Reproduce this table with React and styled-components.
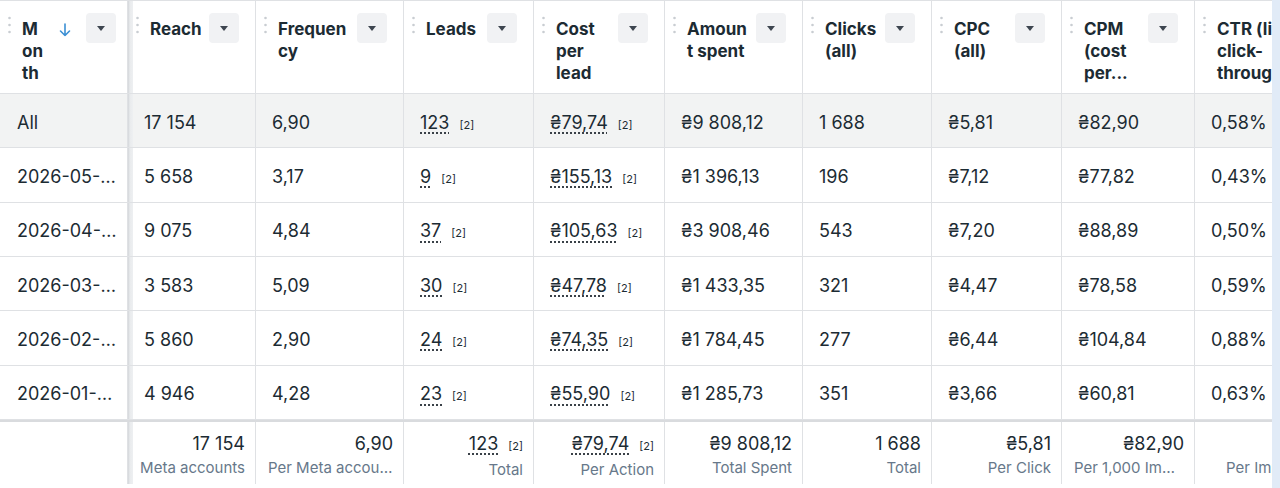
import React from "react";
import styled, { createGlobalStyle } from "styled-components";

const COLORS = {
    TEXT: "#1c2b33",
    MUTED: "#67788a",
    LINE: "#dfe1e4",
    ALL_ROW: "#f2f3f3",
    BUTTON: "#f1f2f4",
    SORT: "#3b8fd4",
    STRIP: "#e1ebf7",
};

const COLUMNS = [
    { key: "month", width: 128, label: ["M", "on", "th"], sorted: true },
    { key: "reach", width: 128, label: ["Reach"], footer: "Meta accounts" },
    { key: "freq", width: 148, label: ["Frequen", "cy"], footer: "Per Meta accounts" },
    { key: "leads", width: 130, label: ["Leads"], footer: "Total", linked: true },
    { key: "cpl", width: 131, label: ["Cost", "per", "lead"], footer: "Per Action", linked: true },
    { key: "spent", width: 138, label: ["Amoun", "t spent"], footer: "Total Spent" },
    { key: "clicks", width: 129, label: ["Clicks", "(all)"], footer: "Total" },
    { key: "cpc", width: 130, label: ["CPC", "(all)"], footer: "Per Click" },
    { key: "cpm", width: 133, label: ["CPM", "(cost", "per..."], footer: "Per 1,000 Impressions" },
    { key: "ctr", width: 148, label: ["CTR (link", "click-", "through..."], footer: "Per Impression" },
];

const TEMPLATE = COLUMNS.map((c) => `${c.width}px`).join(" ");

const ROWS = [
    { month: "All", reach: "17 154", freq: "6,90", leads: "123", cpl: "₴79,74", spent: "₴9 808,12", clicks: "1 688", cpc: "₴5,81", cpm: "₴82,90", ctr: "0,58%" },
    { month: "2026-05-01 - 2026-05-31", reach: "5 658", freq: "3,17", leads: "9", cpl: "₴155,13", spent: "₴1 396,13", clicks: "196", cpc: "₴7,12", cpm: "₴77,82", ctr: "0,43%" },
    { month: "2026-04-01 - 2026-04-30", reach: "9 075", freq: "4,84", leads: "37", cpl: "₴105,63", spent: "₴3 908,46", clicks: "543", cpc: "₴7,20", cpm: "₴88,89", ctr: "0,50%" },
    { month: "2026-03-01 - 2026-03-31", reach: "3 583", freq: "5,09", leads: "30", cpl: "₴47,78", spent: "₴1 433,35", clicks: "321", cpc: "₴4,47", cpm: "₴78,58", ctr: "0,59%" },
    { month: "2026-02-01 - 2026-02-28", reach: "5 860", freq: "2,90", leads: "24", cpl: "₴74,35", spent: "₴1 784,45", clicks: "277", cpc: "₴6,44", cpm: "₴104,84", ctr: "0,88%" },
    { month: "2026-01-01 - 2026-01-31", reach: "4 946", freq: "4,28", leads: "23", cpl: "₴55,90", spent: "₴1 285,73", clicks: "351", cpc: "₴3,66", cpm: "₴60,81", ctr: "0,63%" },
];

const TOTALS = ROWS[0];

const GlobalStyle = createGlobalStyle`
    html, body {
        margin: 0;
        background: #ffffff;
        overflow: hidden;
    }
    body {
        font-family: Inter, "Liberation Sans", sans-serif;
        color: ${COLORS.TEXT};
    }
`;

const Frame = styled("div")`
    display: flex;
    height: 488px;
    width: 1280px;
`;

const Viewport = styled("div")`
    flex: 1;
    overflow: hidden;
`;

const Strip = styled("div")`
    background: ${COLORS.STRIP};
    width: 8px;
`;

const Row = styled("div")`
    background: ${(props) => props.background || "#ffffff"};
    border-bottom: 1px solid ${COLORS.LINE};
    box-sizing: border-box;
    display: grid;
    grid-template-columns: ${TEMPLATE};
    height: ${(props) => props.height || "54.33px"};
`;

const HeaderRow = styled(Row)`
    border-top: 1px solid ${COLORS.LINE};
`;

const FooterRow = styled(Row)`
    border-bottom: 0;
    border-top: 2px solid #d9dbde;
    height: 64px;
`;

const Cell = styled("div")`
    border-right: 1px solid ${COLORS.LINE};
    box-sizing: border-box;
    min-width: 0;
    position: relative;

    ${(props) =>
        props.sticky &&
        `
        &::after {
            background: linear-gradient(to right, #d3d6da, #e9ebed 40%, #eef0f2);
            bottom: 0;
            content: "";
            position: absolute;
            right: -6px;
            top: 0;
            width: 5px;
            z-index: 2;
        }
    `}
`;

const HeadCell = styled(Cell)`
    align-items: flex-start;
    display: flex;
    padding: 12px ${(props) => (props.sticky ? "11px" : "16px")} 0 8px;
`;

const Grip = styled("svg")`
    flex: none;
    margin-top: 3px;
`;

const Label = styled("div")`
    flex: 1;
    font-size: 17px;
    font-weight: 700;
    line-height: 22px;
    margin-left: 11px;
    margin-top: 5px;
    white-space: nowrap;
`;

const SortIcon = styled("svg")`
    flex: none;
    margin: 10px 15px 0 0;
`;

const MenuButton = styled("div")`
    align-items: center;
    background: ${COLORS.BUTTON};
    border-radius: 4px;
    display: flex;
    flex: none;
    height: 30px;
    justify-content: center;
    width: 30px;

    &::before {
        border-left: 4.5px solid transparent;
        border-right: 4.5px solid transparent;
        border-top: 5px solid #3e4650;
        content: "";
        margin-top: 1px;
    }
`;

const BodyCell = styled(Cell)`
    align-items: center;
    display: flex;
    font-size: 18px;
    padding: 3px ${(props) => (props.sticky ? "7px 0 17px" : "16px 0")};
    white-space: nowrap;
`;

const Truncate = styled("span")`
    overflow: hidden;
    text-overflow: ellipsis;
    white-space: nowrap;
`;

const Value = styled("span")`
    align-items: baseline;
    display: inline-flex;
`;

const Linked = styled("span")`
    text-decoration: underline dotted #3a4148;
    text-decoration-thickness: 1.5px;
    text-underline-offset: 4px;
`;

const Note = styled("span")`
    font-size: 11px;
    margin-left: 10px;
`;

const FootCell = styled(Cell)`
    align-items: flex-end;
    display: flex;
    flex-direction: column;
    padding: 10px 10px 0 12px;
`;

const FootValue = styled("div")`
    font-size: 18px;
    line-height: 24px;
    white-space: nowrap;
`;

const FootLabel = styled("div")`
    color: ${COLORS.MUTED};
    font-size: 15px;
    line-height: 24px;
    max-width: 100%;
    overflow: hidden;
    text-overflow: ellipsis;
    white-space: nowrap;
`;

const GripDots = () => (
    <Grip width="3" height="18" viewBox="0 0 3 18">
        {[2, 9, 16].map((cy) => (
            <circle key={cy} cx="1.5" cy={cy} r="1.3" fill="#c9cdd2" />
        ))}
    </Grip>
);

const SortArrow = () => (
    <SortIcon width="12" height="14" viewBox="0 0 12 14">
        <path
            d="M6 1v11.5M1.5 8l4.5 4.5L10.5 8"
            fill="none"
            stroke={COLORS.SORT}
            strokeWidth="1.6"
            strokeLinecap="round"
            strokeLinejoin="round"
        />
    </SortIcon>
);

const CellValue = ({ column, value }) => {
    if (!column.linked) return value;
    return (
        <Value>
            <Linked>{value}</Linked>
            <Note>[2]</Note>
        </Value>
    );
};

const App = () => {
    return (
        <>
            <GlobalStyle />
            <Frame>
                <Viewport>
                    <HeaderRow height="94px">
                        {COLUMNS.map((c, idx) => (
                            <HeadCell key={c.key} sticky={idx === 0}>
                                <GripDots />
                                <Label>
                                    {c.label.map((line, i) => (
                                        <div key={i}>{line}</div>
                                    ))}
                                </Label>
                                {c.sorted && <SortArrow />}
                                <MenuButton />
                            </HeadCell>
                        ))}
                    </HeaderRow>
                    {ROWS.map((r, ridx) => (
                        <Row
                            key={ridx}
                            background={ridx === 0 ? COLORS.ALL_ROW : null}
                        >
                            {COLUMNS.map((c, idx) => (
                                <BodyCell key={c.key} sticky={idx === 0}>
                                    {idx === 0 ? (
                                        <Truncate>{r[c.key]}</Truncate>
                                    ) : (
                                        <CellValue column={c} value={r[c.key]} />
                                    )}
                                </BodyCell>
                            ))}
                        </Row>
                    ))}
                    <FooterRow>
                        {COLUMNS.map((c, idx) => (
                            <FootCell key={c.key} sticky={idx === 0}>
                                {idx > 0 && (
                                    <>
                                        <FootValue>
                                            <CellValue column={c} value={TOTALS[c.key]} />
                                        </FootValue>
                                        <FootLabel>{c.footer}</FootLabel>
                                    </>
                                )}
                            </FootCell>
                        ))}
                    </FooterRow>
                </Viewport>
                <Strip />
            </Frame>
        </>
    );
};

export default App;
